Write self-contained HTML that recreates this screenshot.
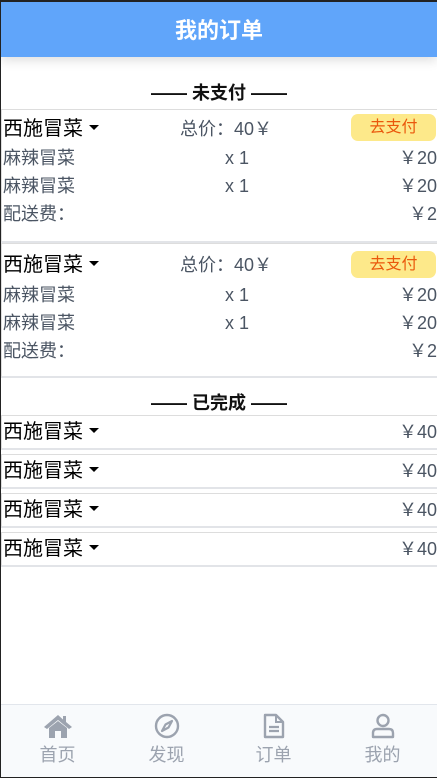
<!DOCTYPE html>
<html><head><meta charset="utf-8"><style>
*{margin:0;padding:0;box-sizing:border-box}
body{width:437px;height:778px;background:#222;font-family:"Liberation Sans","Noto Sans CJK SC",sans-serif;overflow:hidden;position:relative}
.page{position:absolute;left:1px;top:2px;width:436px;height:775px;background:#fff;overflow:hidden}
.hdr{position:absolute;left:0;top:0;width:436px;height:55px;background:#60a5fa;color:#fff;font-size:22px;font-weight:bold;text-align:center;line-height:58px;box-shadow:0 4px 10px rgba(0,0,0,.12)}
.sec{position:absolute;left:0;width:436px;text-align:center;font-size:18px;font-weight:bold;color:#111}
.card{position:absolute;left:0;width:436px;border-top:1px solid #ddd;border-bottom:2px solid #e2e4e8;border-left:1px solid #ddd}
.row{position:absolute;left:1px;right:0;height:28px;font-size:18px;color:#4b5563}
.row span{position:absolute;top:0;line-height:28px;white-space:nowrap}
.name{font-size:20px;color:#000}
.tri{display:inline-block;width:0;height:0;border-left:5px solid transparent;border-right:5px solid transparent;border-top:5px solid #000;vertical-align:middle;margin-left:6px;position:relative;top:-2px}
.btn{position:absolute;right:1px;width:85px;height:27px;background:#fde98a;border-radius:7px;color:#ea580c;font-size:16px;text-align:center;line-height:27px}
.nav{position:absolute;left:0;top:702px;width:436px;height:73px;background:#f8fafc;border-top:1px solid #e2e6ec}
.ni{position:absolute;top:0;width:109px;text-align:center;color:#9ca3af;font-size:18px}
.ni svg{display:block;margin:8px auto 0}
.ni div{line-height:26px;margin-top:3px}
</style></head><body><div class="page">
<div class="hdr">我的订单</div>
<div class="sec" style="top:77px">—— 未支付 ——</div>

<div class="card" style="top:107px;height:134px">
 <div class="row" style="top:5px"><span class="name" style="left:0">西施冒菜<i class="tri"></i></span><span style="left:177px">总价：40￥</span></div>
 <div class="btn" style="top:4px">去支付</div>
 <div class="row" style="top:34px"><span style="left:0">麻辣冒菜</span><span style="left:222px">x 1</span><span style="right:0">￥20</span></div>
 <div class="row" style="top:62px"><span style="left:0">麻辣冒菜</span><span style="left:222px">x 1</span><span style="right:0">￥20</span></div>
 <div class="row" style="top:90px"><span style="left:0">配送费：</span><span style="right:0">￥2</span></div>
</div>
<div class="card" style="top:241px;height:135px">
 <div class="row" style="top:7px"><span class="name" style="left:0">西施冒菜<i class="tri"></i></span><span style="left:177px">总价：40￥</span></div>
 <div class="btn" style="top:7px">去支付</div>
 <div class="row" style="top:37px"><span style="left:0">麻辣冒菜</span><span style="left:222px">x 1</span><span style="right:0">￥20</span></div>
 <div class="row" style="top:65px"><span style="left:0">麻辣冒菜</span><span style="left:222px">x 1</span><span style="right:0">￥20</span></div>
 <div class="row" style="top:93px"><span style="left:0">配送费：</span><span style="right:0">￥2</span></div>
</div>

<div class="sec" style="top:387px">—— 已完成 ——</div>
<div class="card" style="top:413px;height:35px"><div class="row" style="top:2px"><span class="name" style="left:0">西施冒菜<i class="tri"></i></span><span style="right:0">￥40</span></div></div>
<div class="card" style="top:452px;height:35px"><div class="row" style="top:2px"><span class="name" style="left:0">西施冒菜<i class="tri"></i></span><span style="right:0">￥40</span></div></div>
<div class="card" style="top:491px;height:35px"><div class="row" style="top:2px"><span class="name" style="left:0">西施冒菜<i class="tri"></i></span><span style="right:0">￥40</span></div></div>
<div class="card" style="top:530px;height:35px"><div class="row" style="top:2px"><span class="name" style="left:0">西施冒菜<i class="tri"></i></span><span style="right:0">￥40</span></div></div>

<div class="nav">
 <div class="ni" style="left:2px"><svg width="30" height="26" viewBox="0 0 30 26"><path d="M15 2 L1 14 L4 16 L15 7 L26 16 L29 14 L23 9 V3 H20 V6.5 Z" fill="#9ca3af"/><path d="M6 15 L15 8 L24 15 V25 H18 V18 H12 V25 H6 Z" fill="#9ca3af"/></svg><div>首页</div></div>
 <div class="ni" style="left:111px"><svg width="26" height="26" viewBox="0 0 26 26"><circle cx="13" cy="13" r="11" fill="none" stroke="#9ca3af" stroke-width="2.4"/><path d="M18 8 L14.5 14.5 L8 18 L11.5 11.5 Z" fill="none" stroke="#9ca3af" stroke-width="2.2" stroke-linejoin="round"/></svg><div>发现</div></div>
 <div class="ni" style="left:218px"><svg width="22" height="26" viewBox="0 0 22 26"><path d="M2 2 H13 L20 9 V24 H2 Z" fill="none" stroke="#9ca3af" stroke-width="2.4" stroke-linejoin="round"/><path d="M13 2 V9 H20" fill="none" stroke="#9ca3af" stroke-width="2"/><path d="M6 14 H16 M6 18 H16" stroke="#9ca3af" stroke-width="2.2"/></svg><div>订单</div></div>
 <div class="ni" style="left:327px"><svg width="24" height="26" viewBox="0 0 24 26"><circle cx="12" cy="7.5" r="5.5" fill="none" stroke="#9ca3af" stroke-width="2.4"/><path d="M2 24 V20 Q2 16 6 16 H18 Q22 16 22 20 V24 Z" fill="none" stroke="#9ca3af" stroke-width="2.4" stroke-linejoin="round"/></svg><div>我的</div></div>
</div>
</div></body></html>
